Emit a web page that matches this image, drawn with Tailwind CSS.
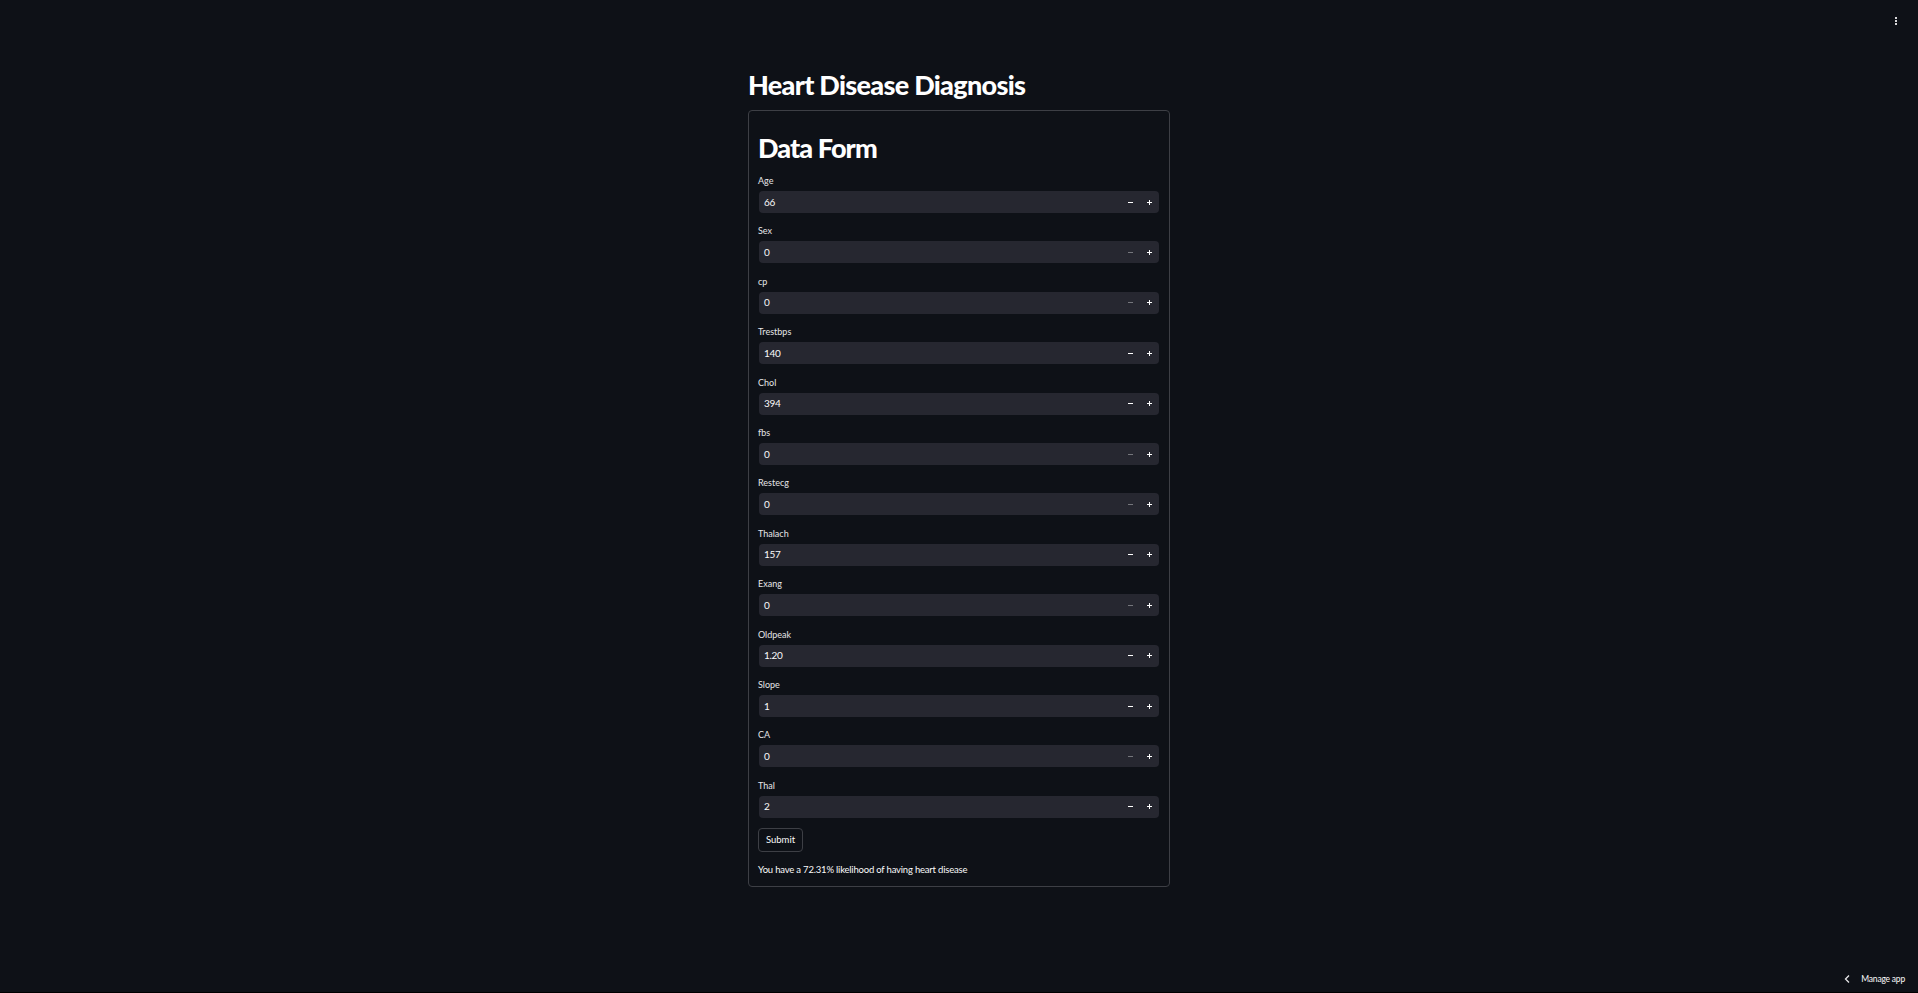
<!DOCTYPE html>
<html><head>
<meta charset="utf-8">
<script src="https://cdn.jsdelivr.net/npm/@tailwindcss/browser@4"></script>
<title>Heart Disease Diagnosis</title>
</head>
<body class="bg-[#0e1117] text-[#fafafa] font-['Lato',sans-serif] h-[993px] overflow-hidden relative">

<!-- top right menu -->
<button class="absolute top-[17px] right-[21px] flex flex-col gap-[1px]">
  <span class="w-[2px] h-[2px] bg-[#d8d8da]"></span>
  <span class="w-[2px] h-[2px] bg-[#d8d8da]"></span>
  <span class="w-[2px] h-[2px] bg-[#d8d8da]"></span>
</button>

<main class="w-[422px] ml-[748px] pt-[67px]">
  <h1 class="text-[27px] leading-[36px] font-black tracking-[-0.7px] text-white mb-[7px]">Heart Disease Diagnosis</h1>

  <div class="border border-[#3d3f45] rounded-[4px] h-[777px] px-[9px] pt-[19px]">
    <h2 class="text-[27px] leading-[36px] font-black tracking-[-0.9px] text-white mb-[8px]">Data Form</h2>

    <div class="flex flex-col gap-[11.42px]">
      <div><label class="block text-[9px] leading-[14px] mb-[3px] text-[#e6e6e8]">Age</label>
        <div class="flex items-center h-[22px] mx-[1px] pl-[5px] rounded-[4px] bg-[#262730]"><span class="flex-1 text-[10px] tracking-[-0.3px]">66</span><span class="w-[19px] flex justify-center"><span class="w-[5px] h-[1px] bg-white"></span></span><span class="w-[19px] flex justify-center"><svg width="5" height="5" viewBox="0 0 5 5" fill="#fff"><path d="M2 0h1v2h2v1H3v2H2V3H0V2h2z"/></svg></span></div></div>
      <div><label class="block text-[9px] leading-[14px] mb-[3px] text-[#e6e6e8]">Sex</label>
        <div class="flex items-center h-[22px] mx-[1px] pl-[5px] rounded-[4px] bg-[#262730]"><span class="flex-1 text-[10px] tracking-[-0.3px]">0</span><span class="w-[19px] flex justify-center"><span class="w-[5px] h-[1px] bg-[#75767c]"></span></span><span class="w-[19px] flex justify-center"><svg width="5" height="5" viewBox="0 0 5 5" fill="#fff"><path d="M2 0h1v2h2v1H3v2H2V3H0V2h2z"/></svg></span></div></div>
      <div><label class="block text-[9px] leading-[14px] mb-[3px] text-[#e6e6e8]">cp</label>
        <div class="flex items-center h-[22px] mx-[1px] pl-[5px] rounded-[4px] bg-[#262730]"><span class="flex-1 text-[10px] tracking-[-0.3px]">0</span><span class="w-[19px] flex justify-center"><span class="w-[5px] h-[1px] bg-[#75767c]"></span></span><span class="w-[19px] flex justify-center"><svg width="5" height="5" viewBox="0 0 5 5" fill="#fff"><path d="M2 0h1v2h2v1H3v2H2V3H0V2h2z"/></svg></span></div></div>
      <div><label class="block text-[9px] leading-[14px] mb-[3px] text-[#e6e6e8]">Trestbps</label>
        <div class="flex items-center h-[22px] mx-[1px] pl-[5px] rounded-[4px] bg-[#262730]"><span class="flex-1 text-[10px] tracking-[-0.3px]">140</span><span class="w-[19px] flex justify-center"><span class="w-[5px] h-[1px] bg-white"></span></span><span class="w-[19px] flex justify-center"><svg width="5" height="5" viewBox="0 0 5 5" fill="#fff"><path d="M2 0h1v2h2v1H3v2H2V3H0V2h2z"/></svg></span></div></div>
      <div><label class="block text-[9px] leading-[14px] mb-[3px] text-[#e6e6e8]">Chol</label>
        <div class="flex items-center h-[22px] mx-[1px] pl-[5px] rounded-[4px] bg-[#262730]"><span class="flex-1 text-[10px] tracking-[-0.3px]">394</span><span class="w-[19px] flex justify-center"><span class="w-[5px] h-[1px] bg-white"></span></span><span class="w-[19px] flex justify-center"><svg width="5" height="5" viewBox="0 0 5 5" fill="#fff"><path d="M2 0h1v2h2v1H3v2H2V3H0V2h2z"/></svg></span></div></div>
      <div><label class="block text-[9px] leading-[14px] mb-[3px] text-[#e6e6e8]">fbs</label>
        <div class="flex items-center h-[22px] mx-[1px] pl-[5px] rounded-[4px] bg-[#262730]"><span class="flex-1 text-[10px] tracking-[-0.3px]">0</span><span class="w-[19px] flex justify-center"><span class="w-[5px] h-[1px] bg-[#75767c]"></span></span><span class="w-[19px] flex justify-center"><svg width="5" height="5" viewBox="0 0 5 5" fill="#fff"><path d="M2 0h1v2h2v1H3v2H2V3H0V2h2z"/></svg></span></div></div>
      <div><label class="block text-[9px] leading-[14px] mb-[3px] text-[#e6e6e8]">Restecg</label>
        <div class="flex items-center h-[22px] mx-[1px] pl-[5px] rounded-[4px] bg-[#262730]"><span class="flex-1 text-[10px] tracking-[-0.3px]">0</span><span class="w-[19px] flex justify-center"><span class="w-[5px] h-[1px] bg-[#75767c]"></span></span><span class="w-[19px] flex justify-center"><svg width="5" height="5" viewBox="0 0 5 5" fill="#fff"><path d="M2 0h1v2h2v1H3v2H2V3H0V2h2z"/></svg></span></div></div>
      <div><label class="block text-[9px] leading-[14px] mb-[3px] text-[#e6e6e8]">Thalach</label>
        <div class="flex items-center h-[22px] mx-[1px] pl-[5px] rounded-[4px] bg-[#262730]"><span class="flex-1 text-[10px] tracking-[-0.3px]">157</span><span class="w-[19px] flex justify-center"><span class="w-[5px] h-[1px] bg-white"></span></span><span class="w-[19px] flex justify-center"><svg width="5" height="5" viewBox="0 0 5 5" fill="#fff"><path d="M2 0h1v2h2v1H3v2H2V3H0V2h2z"/></svg></span></div></div>
      <div><label class="block text-[9px] leading-[14px] mb-[3px] text-[#e6e6e8]">Exang</label>
        <div class="flex items-center h-[22px] mx-[1px] pl-[5px] rounded-[4px] bg-[#262730]"><span class="flex-1 text-[10px] tracking-[-0.3px]">0</span><span class="w-[19px] flex justify-center"><span class="w-[5px] h-[1px] bg-[#75767c]"></span></span><span class="w-[19px] flex justify-center"><svg width="5" height="5" viewBox="0 0 5 5" fill="#fff"><path d="M2 0h1v2h2v1H3v2H2V3H0V2h2z"/></svg></span></div></div>
      <div><label class="block text-[9px] leading-[14px] mb-[3px] text-[#e6e6e8]">Oldpeak</label>
        <div class="flex items-center h-[22px] mx-[1px] pl-[5px] rounded-[4px] bg-[#262730]"><span class="flex-1 text-[10px] tracking-[-0.3px]">1.20</span><span class="w-[19px] flex justify-center"><span class="w-[5px] h-[1px] bg-white"></span></span><span class="w-[19px] flex justify-center"><svg width="5" height="5" viewBox="0 0 5 5" fill="#fff"><path d="M2 0h1v2h2v1H3v2H2V3H0V2h2z"/></svg></span></div></div>
      <div><label class="block text-[9px] leading-[14px] mb-[3px] text-[#e6e6e8]">Slope</label>
        <div class="flex items-center h-[22px] mx-[1px] pl-[5px] rounded-[4px] bg-[#262730]"><span class="flex-1 text-[10px] tracking-[-0.3px]">1</span><span class="w-[19px] flex justify-center"><span class="w-[5px] h-[1px] bg-white"></span></span><span class="w-[19px] flex justify-center"><svg width="5" height="5" viewBox="0 0 5 5" fill="#fff"><path d="M2 0h1v2h2v1H3v2H2V3H0V2h2z"/></svg></span></div></div>
      <div><label class="block text-[9px] leading-[14px] mb-[3px] text-[#e6e6e8]">CA</label>
        <div class="flex items-center h-[22px] mx-[1px] pl-[5px] rounded-[4px] bg-[#262730]"><span class="flex-1 text-[10px] tracking-[-0.3px]">0</span><span class="w-[19px] flex justify-center"><span class="w-[5px] h-[1px] bg-[#75767c]"></span></span><span class="w-[19px] flex justify-center"><svg width="5" height="5" viewBox="0 0 5 5" fill="#fff"><path d="M2 0h1v2h2v1H3v2H2V3H0V2h2z"/></svg></span></div></div>
      <div><label class="block text-[9px] leading-[14px] mb-[3px] text-[#e6e6e8]">Thal</label>
        <div class="flex items-center h-[22px] mx-[1px] pl-[5px] rounded-[4px] bg-[#262730]"><span class="flex-1 text-[10px] tracking-[-0.3px]">2</span><span class="w-[19px] flex justify-center"><span class="w-[5px] h-[1px] bg-white"></span></span><span class="w-[19px] flex justify-center"><svg width="5" height="5" viewBox="0 0 5 5" fill="#fff"><path d="M2 0h1v2h2v1H3v2H2V3H0V2h2z"/></svg></span></div></div>
    </div>

    <button class="block mt-[10px] h-[24px] w-[45px] border border-[#3d3f45] rounded-[4px] text-[9.5px] leading-none">Submit</button>
    <p class="mt-[11px] text-[9.5px] leading-[14px] tracking-[-0.2px]">You have a 72.31% likelihood of having heart disease</p>
  </div>
</main>

<!-- manage app -->
<div class="absolute right-[13px] top-[972px] flex items-center gap-[11px] text-[8.5px] leading-[14px] tracking-[-0.2px]">
  <svg width="6" height="8" viewBox="0 0 6 8" fill="none" stroke="#e6e6e8" stroke-width="1.3"><path d="M5 0.5 L1.5 4 L5 7.5"/></svg>
  <span>Manage app</span>
</div>
<div class="absolute left-0 right-0 bottom-0 h-px bg-black"></div>
</body></html>
